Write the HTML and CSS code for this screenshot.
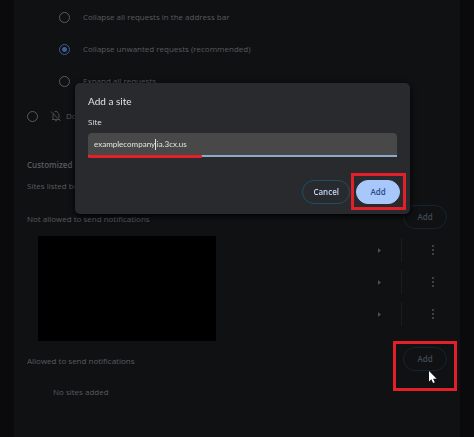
FILE: index.html
```html
<!DOCTYPE html>
<html lang="en">
<head>
  <meta charset="UTF-8">
  <meta name="viewport" content="width=device-width, initial-scale=1.0">
  <title>Settings - Notifications</title>
  <link rel="stylesheet" href="styles.css">
</head>
<body>

  <main class="settings">
    <div class="sub-options">
      <label class="option"><input type="radio" name="requests"> Collapse all requests in the address bar</label>
      <label class="option"><input type="radio" name="requests" checked> Collapse unwanted requests (recommended)</label>
      <label class="option"><input type="radio" name="requests"> Expand all requests</label>
    </div>

    <label class="option block-option">
      <input type="radio" name="default">
      <svg class="bell" viewBox="0 0 24 24" aria-hidden="true">
        <path d="M4 19h16M6 19v-9c0-1.400.500-2.700 1.300-3.700M10 4.400V3h4v1.400c2.400.700 4 2.900 4 5.600v6M10 21.500h4M2 3l19 19" />
      </svg>
      Don't allow sites to send notifications
    </label>

    <h2>Customized behaviors</h2>
    <p class="hint">Sites listed below follow a custom setting instead of the default</p>

    <section>
      <div class="section-head">
        <h3>Not allowed to send notifications</h3>
        <button type="button" class="btn">Add</button>
      </div>
      <div class="site-list">
        <div class="redacted"></div>
        <ul class="rows">
          <li>
            <button type="button" class="icon-btn" aria-label="Site details"><svg class="arrow" viewBox="0 0 4 6"><path d="M0 0l4 3-4 3z" /></svg></button>
            <button type="button" class="icon-btn more" aria-label="More actions"><svg class="dots" viewBox="0 0 4 12"><circle cx="2" cy="2" r="1" /><circle cx="2" cy="6" r="1" /><circle cx="2" cy="10" r="1" /></svg></button>
          </li>
          <li>
            <button type="button" class="icon-btn" aria-label="Site details"><svg class="arrow" viewBox="0 0 4 6"><path d="M0 0l4 3-4 3z" /></svg></button>
            <button type="button" class="icon-btn more" aria-label="More actions"><svg class="dots" viewBox="0 0 4 12"><circle cx="2" cy="2" r="1" /><circle cx="2" cy="6" r="1" /><circle cx="2" cy="10" r="1" /></svg></button>
          </li>
          <li>
            <button type="button" class="icon-btn" aria-label="Site details"><svg class="arrow" viewBox="0 0 4 6"><path d="M0 0l4 3-4 3z" /></svg></button>
            <button type="button" class="icon-btn more" aria-label="More actions"><svg class="dots" viewBox="0 0 4 12"><circle cx="2" cy="2" r="1" /><circle cx="2" cy="6" r="1" /><circle cx="2" cy="10" r="1" /></svg></button>
          </li>
        </ul>
      </div>
    </section>

    <section>
      <div class="section-head allowed">
        <h3>Allowed to send notifications</h3>
        <div class="target">
          <button type="button" class="btn">Add</button>
          <span class="marker marker-page"></span>
          <svg class="cursor" viewBox="0 0 8 12" aria-hidden="true"><path d="M0 0v10.500l2.400-2.200 1.700 3.700 1.700-.800-1.700-3.500h3.500z" /></svg>
        </div>
      </div>
      <p class="empty">No sites added</p>
    </section>
  </main>

  <dialog class="dialog" open aria-labelledby="dialog-title">
    <h1 id="dialog-title">Add a site</h1>
    <label for="site" class="field-label">Site</label>
    <div class="field">
      <input type="text" id="site" value="examplecompany.ia.3cx.us" spellcheck="false">
      <span class="caret"></span>
    </div>
    <div class="actions">
      <button type="button" class="btn cancel">Cancel</button>
      <div class="target">
        <button type="button" class="btn primary">Add</button>
        <span class="marker"></span>
      </div>
    </div>
  </dialog>

</body>
</html>
```

FILE: styles.css
```css
* {
  box-sizing: border-box;
}

body {
  margin: 0;
  min-height: 100vh;
  display: flex;
  background-color: #0a0a0c;
  color: #5a5b5f;
  font-family: "Open Sans", "Noto Sans", sans-serif;
  font-size: 8px;
  line-height: 12px;
}

h1, h2, h3, p, ul {
  margin: 0;
  padding: 0;
  font-size: inherit;
  font-weight: 400;
}

button, input {
  font: inherit;
  color: inherit;
}

/* Settings page, dimmed behind the dialog */
.settings {
  flex: 1;
  margin: 0 14px;
  padding: 1px 13px;
  background-color: #101113;
}

.sub-options {
  padding-left: 32px;
}

.option {
  display: flex;
  align-items: center;
  gap: 13px;
  height: 32px;
}

.option input {
  appearance: none;
  flex: none;
  width: 11px;
  height: 11px;
  margin: 0;
  border: 1px solid #5a5b5f;
  border-radius: 50%;
}

.option input:checked {
  border-color: #3f5b95;
  background: radial-gradient(circle, #3f5b95 2px, transparent 3px);
}

.block-option {
  gap: 4px;
  margin-top: 3px;
}

.bell {
  width: 12px;
  height: 12px;
  margin-left: 8px;
  fill: none;
  stroke: #4b4c4e;
  stroke-width: 2;
}

h2 {
  margin-top: 27px;
  font-weight: 600;
}

.hint {
  margin-top: 9px;
}

.section-head {
  display: flex;
  align-items: center;
  justify-content: space-between;
  margin-top: 13px;
}

.section-head h3 {
  padding-top: 4px;
}

.btn {
  height: 24px;
  min-width: 44px;
  padding: 0 10px;
  border: 1px solid #16252d;
  border-radius: 12px;
  background: none;
  color: #424a58;
  font-weight: 600;
}

.site-list {
  display: flex;
  justify-content: space-between;
  margin-top: 7px;
  padding-left: 11px;
}

.redacted {
  flex: 0 1 178px;
  height: 105px;
  background-color: #000;
}

.rows {
  margin-top: -2px;
  list-style: none;
}

.rows li {
  display: flex;
  align-items: center;
  height: 32px;
}

.icon-btn {
  display: flex;
  justify-content: center;
  width: 43px;
  padding: 6px 0;
  border: 0;
  background: none;
}

.more {
  width: 46px;
  padding-left: 16px;
  border-left: 1px solid #1b1c1e;
}

.arrow {
  width: 3px;
  height: 5px;
  fill: #505153;
}

.dots {
  width: 4px;
  height: 12px;
  fill: #505153;
}

.allowed {
  margin-top: 6px;
}

.empty {
  margin-top: 15px;
  padding-left: 26px;
}

/* Red frames around the buttons to click */
.target {
  position: relative;
  display: flex;
}

.marker {
  position: absolute;
  inset: -7px -6px -6px -5px;
  border: 3px solid #e3202a;
  pointer-events: none;
}

.marker-page {
  inset: -6px -10px -20px -10px;
}

.cursor {
  position: absolute;
  left: 26px;
  top: 24px;
  width: 8px;
  height: 12px;
  fill: #fff;
}

/* Dialog */
.dialog {
  position: fixed;
  inset: 83px 64px auto 75px;
  width: auto;
  margin: 0;
  padding: 10px 13px;
  border: 0;
  border-radius: 5px;
  background-color: #292a2d;
  color: #e3e3e3;
  box-shadow: 0 2px 6px #000;
}

.dialog h1 {
  font-family: Lato, sans-serif;
  font-size: 10px;
  line-height: 16px;
}

.field-label {
  display: block;
  margin: 7px 0 5px;
}

.field {
  position: relative;
}

.field input {
  display: block;
  width: 100%;
  height: 24px;
  padding: 0 6px;
  border: 0;
  border-bottom: 2px solid #8fa9c8;
  border-radius: 4px 4px 0 0;
  background-color: #474847;
  font-family: Lato, sans-serif;
  outline: 0;
}

.field::after {
  content: "";
  position: absolute;
  left: 0;
  bottom: -1px;
  width: 37%;
  height: 3px;
  border-radius: 1px;
  background-color: #e3202a;
}

.caret {
  position: absolute;
  left: 67px;
  top: 6px;
  width: 1px;
  height: 11px;
  background-color: #e3e3e3;
}

.actions {
  display: flex;
  justify-content: flex-end;
  gap: 6px;
  margin: 23px -3px 0 0;
}

.cancel {
  border-color: #1d5068;
  color: #c2d7f7;
}

.primary {
  border-color: #a8c7fa;
  background-color: #a8c7fa;
  color: #234a85;
}
```
